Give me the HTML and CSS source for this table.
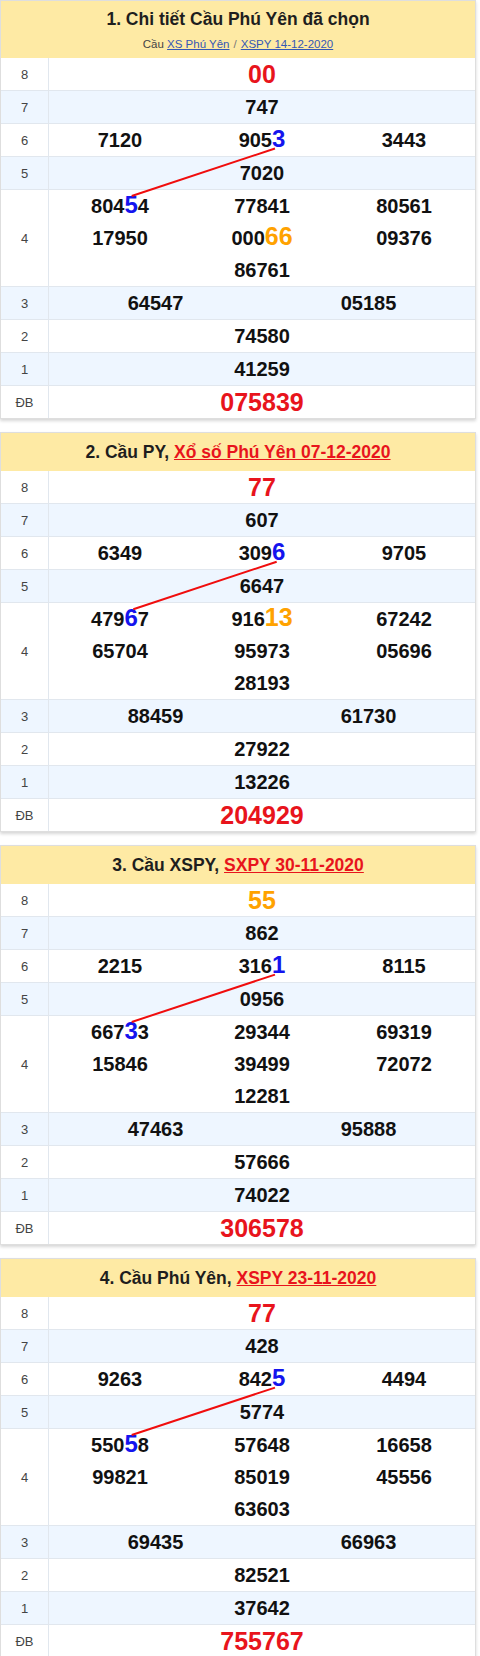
FILE: index.html
```html
<!DOCTYPE html>
<html lang="vi">
<head>
<meta charset="utf-8">
<title>Cầu Phú Yên</title>
<link rel="stylesheet" href="styles.css">
</head>
<body>

<div class="card">
  <div class="head head-two">
    <div class="title">1. Chi tiết Cầu Phú Yên đã chọn</div>
    <div class="sub">Cầu <a href="#">XS Phú Yên</a><span class="sep">/</span><a href="#">XSPY 14-12-2020</a></div>
  </div>
  <div class="rows">
    <div class="r"><div class="lbl">8</div><div class="vals c1"><span class="big red">00</span></div></div>
    <div class="r alt"><div class="lbl">7</div><div class="vals c1"><span>747</span></div></div>
    <div class="r"><div class="lbl">6</div><div class="vals c3"><span>7120</span><span>905<b class="hl">3</b></span><span>3443</span></div></div>
    <div class="r alt"><div class="lbl">5</div><div class="vals c1"><span>7020</span></div></div>
    <div class="r"><div class="lbl">4</div><div class="vals c3"><span>804<b class="hl">5</b>4</span><span>77841</span><span>80561</span><span>17950</span><span>000<b class="ho">66</b></span><span>09376</span><span class="mid">86761</span></div></div>
    <div class="r alt"><div class="lbl">3</div><div class="vals c2"><span>64547</span><span>05185</span></div></div>
    <div class="r"><div class="lbl">2</div><div class="vals c1"><span>74580</span></div></div>
    <div class="r alt"><div class="lbl">1</div><div class="vals c1"><span>41259</span></div></div>
    <div class="r"><div class="lbl">ĐB</div><div class="vals c1"><span class="big red">075839</span></div></div>
    <svg class="link" xmlns="http://www.w3.org/2000/svg"><line x1="274" y1="90.5" x2="130.7" y2="138" /></svg>
  </div>
</div>

<div class="card">
  <div class="head">
    <div class="title">2. Cầu PY, <a href="#">Xổ số Phú Yên 07-12-2020</a></div>
  </div>
  <div class="rows">
    <div class="r"><div class="lbl">8</div><div class="vals c1"><span class="big red">77</span></div></div>
    <div class="r alt"><div class="lbl">7</div><div class="vals c1"><span>607</span></div></div>
    <div class="r"><div class="lbl">6</div><div class="vals c3"><span>6349</span><span>309<b class="hl">6</b></span><span>9705</span></div></div>
    <div class="r alt"><div class="lbl">5</div><div class="vals c1"><span>6647</span></div></div>
    <div class="r"><div class="lbl">4</div><div class="vals c3"><span>479<b class="hl">6</b>7</span><span>916<b class="ho">13</b></span><span>67242</span><span>65704</span><span>95973</span><span>05696</span><span class="mid">28193</span></div></div>
    <div class="r alt"><div class="lbl">3</div><div class="vals c2"><span>88459</span><span>61730</span></div></div>
    <div class="r"><div class="lbl">2</div><div class="vals c1"><span>27922</span></div></div>
    <div class="r alt"><div class="lbl">1</div><div class="vals c1"><span>13226</span></div></div>
    <div class="r"><div class="lbl">ĐB</div><div class="vals c1"><span class="big red">204929</span></div></div>
    <svg class="link" xmlns="http://www.w3.org/2000/svg"><line x1="275.7" y1="90.7" x2="132.3" y2="138.3" /></svg>
  </div>
</div>

<div class="card">
  <div class="head">
    <div class="title">3. Cầu XSPY, <a href="#">SXPY 30-11-2020</a></div>
  </div>
  <div class="rows">
    <div class="r"><div class="lbl">8</div><div class="vals c1"><span class="big org">55</span></div></div>
    <div class="r alt"><div class="lbl">7</div><div class="vals c1"><span>862</span></div></div>
    <div class="r"><div class="lbl">6</div><div class="vals c3"><span>2215</span><span>316<b class="hl">1</b></span><span>8115</span></div></div>
    <div class="r alt"><div class="lbl">5</div><div class="vals c1"><span>0956</span></div></div>
    <div class="r"><div class="lbl">4</div><div class="vals c3"><span>667<b class="hl">3</b>3</span><span>29344</span><span>69319</span><span>15846</span><span>39499</span><span>72072</span><span class="mid">12281</span></div></div>
    <div class="r alt"><div class="lbl">3</div><div class="vals c2"><span>47463</span><span>95888</span></div></div>
    <div class="r"><div class="lbl">2</div><div class="vals c1"><span>57666</span></div></div>
    <div class="r alt"><div class="lbl">1</div><div class="vals c1"><span>74022</span></div></div>
    <div class="r"><div class="lbl">ĐB</div><div class="vals c1"><span class="big red">306578</span></div></div>
    <svg class="link" xmlns="http://www.w3.org/2000/svg"><line x1="274" y1="90.6" x2="130.7" y2="138" /></svg>
  </div>
</div>

<div class="card">
  <div class="head">
    <div class="title">4. Cầu Phú Yên, <a href="#">XSPY 23-11-2020</a></div>
  </div>
  <div class="rows">
    <div class="r"><div class="lbl">8</div><div class="vals c1"><span class="big red">77</span></div></div>
    <div class="r alt"><div class="lbl">7</div><div class="vals c1"><span>428</span></div></div>
    <div class="r"><div class="lbl">6</div><div class="vals c3"><span>9263</span><span>842<b class="hl">5</b></span><span>4494</span></div></div>
    <div class="r alt"><div class="lbl">5</div><div class="vals c1"><span>5774</span></div></div>
    <div class="r"><div class="lbl">4</div><div class="vals c3"><span>550<b class="hl">5</b>8</span><span>57648</span><span>16658</span><span>99821</span><span>85019</span><span>45556</span><span class="mid">63603</span></div></div>
    <div class="r alt"><div class="lbl">3</div><div class="vals c2"><span>69435</span><span>66963</span></div></div>
    <div class="r"><div class="lbl">2</div><div class="vals c1"><span>82521</span></div></div>
    <div class="r alt"><div class="lbl">1</div><div class="vals c1"><span>37642</span></div></div>
    <div class="r"><div class="lbl">ĐB</div><div class="vals c1"><span class="big red">755767</span></div></div>
    <svg class="link" xmlns="http://www.w3.org/2000/svg"><line x1="274" y1="90.6" x2="130.7" y2="138" /></svg>
  </div>
</div>

</body>
</html>
```

FILE: styles.css
```css
html, body {
  margin: 0;
  padding: 0;
  background: #ffffff;
}

body {
  font-family: "Liberation Sans", Arial, sans-serif;
  color: #111;
}

.card {
  width: 476px;
  box-sizing: border-box;
  border: 1px solid #dedede;
  box-shadow: 0 2px 3px rgba(0, 0, 0, 0.16);
  margin-bottom: 13px;
  background: #fff;
}

.head {
  background: #feeaa4;
  text-align: center;
  padding: 6px 0;
}

.head-two {
  padding: 5px 0 4px;
}

.title {
  font-size: 17.5px;
  font-weight: bold;
  line-height: 26px;
  color: #1e1e1e;
}

.title a {
  color: #e8141c;
  text-decoration: underline;
}

.sub {
  font-size: 11.5px;
  line-height: 20px;
  margin-top: 2px;
  color: #444;
}

.sub a {
  color: #3557b5;
  text-decoration: underline;
}

.sep {
  color: #777;
  margin: 0 4px;
}

.rows {
  position: relative;
}

.r {
  display: grid;
  grid-template-columns: 48px 1fr;
  border-bottom: 1px solid #e1e7ee;
}

.r:nth-last-child(2) {
  border-bottom: 0;
}

.r.alt {
  background: #eef6ff;
}

.lbl {
  box-sizing: border-box;
  border-right: 1px solid #e1e7ee;
  font-size: 13px;
  color: #444;
  display: flex;
  align-items: center;
  justify-content: center;
}

.vals {
  display: grid;
  grid-auto-rows: 32px;
  line-height: 32px;
  text-align: center;
  font-size: 20px;
  font-weight: bold;
  color: #111;
}

.c1 { grid-template-columns: 1fr; }
.c2 { grid-template-columns: 1fr 1fr; }
.c3 { grid-template-columns: 1fr 1fr 1fr; }

.mid {
  grid-column: 2;
}

.big {
  font-size: 25px;
}

.red { color: #e8141c; }
.org { color: #ffa200; }

.hl {
  color: #1414ee;
  font-size: 24px;
  line-height: 0;
  font-weight: bold;
}

.ho {
  color: #ffa200;
  font-size: 25px;
  line-height: 0;
  font-weight: bold;
}

.link {
  position: absolute;
  left: 0;
  top: 0;
  width: 100%;
  height: 100%;
  pointer-events: none;
  overflow: visible;
}

.link line {
  stroke: #f00d0d;
  stroke-width: 2;
}
```
